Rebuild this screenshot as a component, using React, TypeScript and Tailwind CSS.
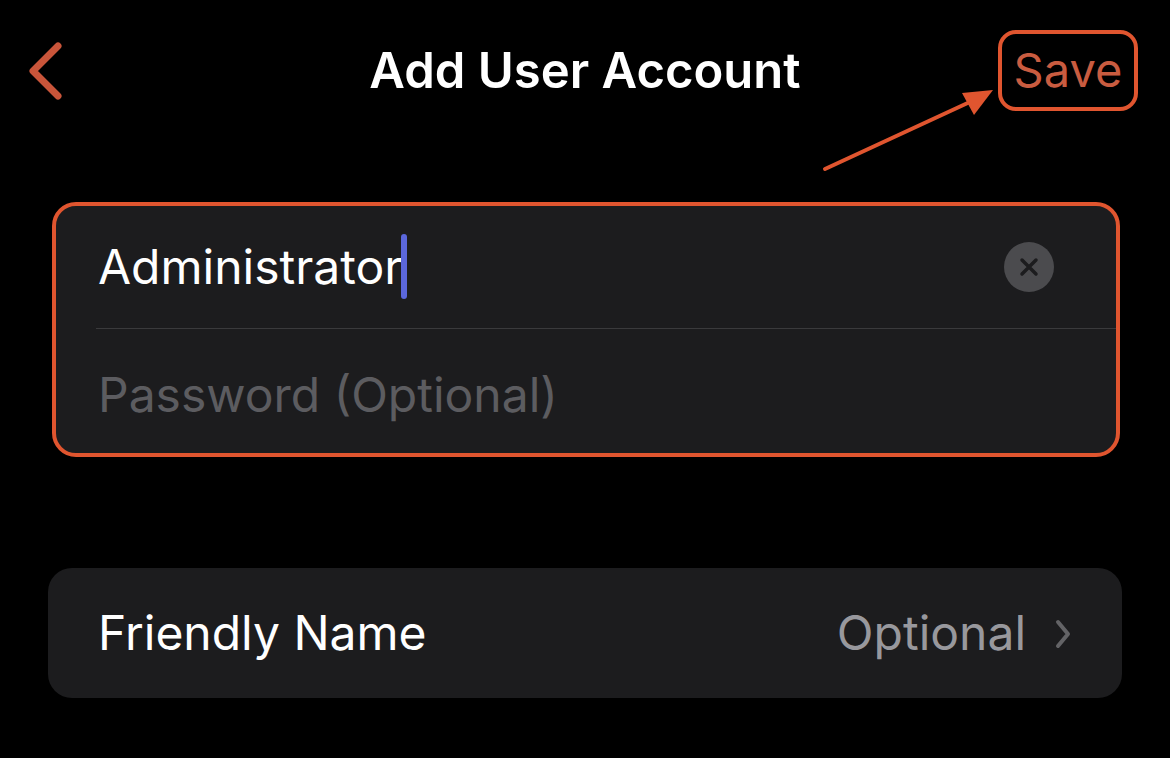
import React from "react";

export default function App() {
  return (
    <div
      className="w-[1170px] h-[758px] bg-black relative overflow-hidden"
      style={{ fontFamily: "Inter, 'Noto Sans', sans-serif" }}
    >
      {/* Nav bar */}
      <div className="h-[142px] grid grid-cols-[1fr_auto_1fr] items-start pt-[30px] pl-[28px] pr-[32px]">
        <div className="h-[81px] flex items-center">
          <svg width="36" height="58" viewBox="0 0 36 58">
            <path d="M30 4 L5 29 L30 54" stroke="#c9553a" strokeWidth="7" fill="none" strokeLinecap="round" strokeLinejoin="round" />
          </svg>
        </div>
        <div className="h-[81px] flex items-center justify-center text-white font-semibold text-[49px] pl-[4px]">
          Add User Account
        </div>
        <div className="flex justify-end">
          <div className="w-[140px] h-[81px] border-[4px] border-[#e0552f] rounded-[18px] flex items-center justify-center text-[#c95c40] text-[47px]">
            Save
          </div>
        </div>
      </div>

      {/* Arrow overlay */}
      <svg className="absolute left-0 top-0" width="1170" height="758" viewBox="0 0 1170 758">
        <line x1="825" y1="169" x2="972" y2="101" stroke="#e0552f" strokeWidth="4" strokeLinecap="round" />
        <polygon points="993,90 962,93 974,115" fill="#e0552f" />
      </svg>

      {/* Card 1 */}
      <div className="mt-[60px] mx-[52px] w-[1068px] h-[255px] rounded-[24px] border-[4px] border-[#e0552f] bg-[#1c1c1e] flex flex-col">
        <div className="h-[122px] flex items-center pl-[42px] pr-[62px]">
          <span className="text-white text-[48px]">Administrator</span>
          <span className="w-[6px] h-[65px] rounded-full bg-[#5b67dc] ml-[-1px] mt-[-2px]" />
          <div className="flex-1" />
          <div className="w-[50px] h-[50px] rounded-full bg-[#4b4b4e] flex items-center justify-center">
            <svg width="22" height="22" viewBox="0 0 22 22">
              <path d="M4 4 L18 18 M18 4 L4 18" stroke="#1c1c1e" strokeWidth="3.5" strokeLinecap="round" />
            </svg>
          </div>
        </div>
        <div className="ml-[40px] h-[1px] bg-[#3a3a3c]" />
        <div className="flex-1 flex items-center pl-[42px] pt-[8px]">
          <span className="text-[#5c5c60] text-[48px]">Password (Optional)</span>
        </div>
      </div>

      {/* Card 2 */}
      <div className="mt-[111px] mx-[48px] w-[1074px] h-[130px] rounded-[24px] bg-[#1c1c1e] flex items-center pl-[50px] pr-[50px]">
        <span className="text-white text-[48px]">Friendly Name</span>
        <div className="flex-1" />
        <span className="text-[#98989d] text-[48px]">Optional</span>
        <svg className="ml-[28px] mt-[2px]" width="18" height="32" viewBox="0 0 18 32">
          <path d="M4 4 L14 16 L4 28" stroke="#636366" strokeWidth="4" fill="none" strokeLinecap="round" strokeLinejoin="round" />
        </svg>
      </div>
    </div>
  );
}
